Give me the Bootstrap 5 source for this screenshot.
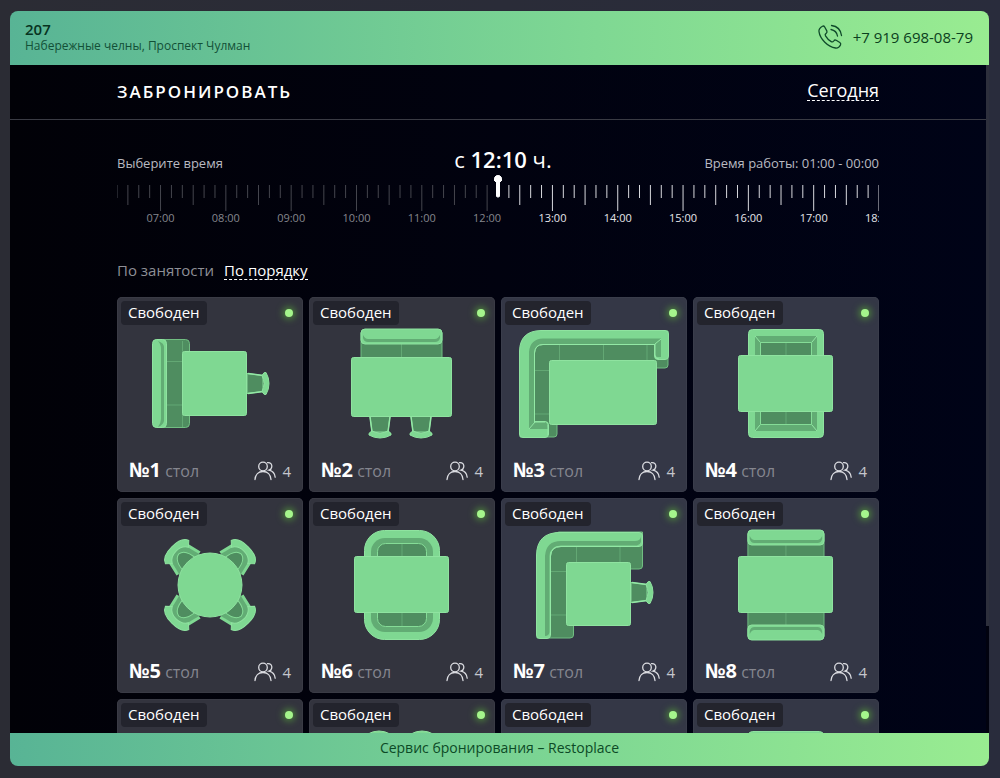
<!DOCTYPE html>
<html lang="ru">
<head>
<meta charset="utf-8">
<meta name="viewport" content="width=device-width, initial-scale=1">
<title>Restoplace – бронирование</title>
<link href="https://cdn.jsdelivr.net/npm/bootstrap@5.3.0/dist/css/bootstrap.min.css" rel="stylesheet">
<style>
  body { background: linear-gradient(90deg, #2b2c34, #292c3c); font-family: "Open Sans", "Noto Sans", sans-serif; color: #fff; padding: 11px 11px 12px 10px; }
  a { color: inherit; text-decoration: none; }
  .brand-bar { background: linear-gradient(90deg, #58b495, #7fd893 60%, #99ec91); color: #07331f; }
  .site-head { border-radius: 8px 8px 0 0; height: 54px; padding: 0 16px 2px 15px; }
  .site-foot { border-radius: 0 0 8px 8px; height: 33px; font-size: 14px; line-height: 30px; color: #0c4a26; }
  .place-name { font-size: 15px; line-height: 18px; font-weight: 600; }
  .place-addr { font-size: 12px; line-height: 16px; color: #125037; }
  .phone { font-size: 15px; gap: 10px; color: #0b4020; }
  .pane { background: linear-gradient(90deg, #010107, #01020f 50%, #000317); }
  .inner { max-width: 762px; width: 86%; margin: 0 auto; }
  .title-bar { height: 55px; border-bottom: 1px solid #3a3b44; }
  .title-bar h1 { font-size: 17px; line-height: 24px; font-weight: 600; letter-spacing: 2px; }
  .dashed { border-bottom: 1px dashed #fff; }
  .today { font-size: 18px; line-height: 20px; margin-bottom: 4px; }
  .note { font-size: 13px; line-height: 20px; color: #b9bac1; padding-bottom: 2px; }
  .chosen { font-size: 22px; line-height: 32px; padding-left: 10px; }
  .time-row { padding-top: 23px; }
  .scale { position: relative; height: 52px; }
  .scale svg { display: block; width: 100%; height: 52px; overflow: hidden; }
  .scale line { stroke: #d8d9de; }
  .scale line.past { stroke: #45464e; }
  .scale text { font-size: 11px; fill: #e6e6ea; text-anchor: middle; }
  .scale text.past { fill: #85868d; }
  .scale input { position: absolute; inset: 0; width: 100%; height: 22px; margin: 0; background: none; appearance: none; -webkit-appearance: none; }
  .scale input::-webkit-slider-thumb { -webkit-appearance: none; width: 8px; height: 22px; border: 0; border-radius: 4px; background: radial-gradient(circle at 4px 4px, #fff 4px, transparent 4px), linear-gradient(90deg, transparent 2px, #fff 2px, #fff 6px, transparent 6px); }
  .sorting { font-size: 15px; line-height: 18px; gap: 10px; padding: 34px 0 17px; color: #8e8f96; }
  .sorting .active { color: #fff; }
  .tables { --bs-gutter-x: 6px; --bs-gutter-y: 6px; }
  .spot { height: 195px; border-radius: 5px; background: #33343e; box-shadow: inset 0 0 0 1px #3a3b45; }
  .col:nth-child(4n+3) .spot, .col:nth-child(4n) .spot { background: #343746; box-shadow: inset 0 0 0 1px #3a3d4b; }
  .state { background: #23242d; border-radius: 4px; font-size: 15px; line-height: 22px; padding: 0 7px 2px; }
  .lamp { width: 8px; height: 8px; border-radius: 50%; background: #a5f58c; box-shadow: 0 0 7px 2px #4f8a3c; margin: 8px 6px 0 0; }
  .spot-top { height: 28px; padding: 4px 4px 0; }
  .plan { display: block; width: 100%; height: 120px; }
  .spot-foot { padding: 7px 12px 0; line-height: 36px; }
  .num { font-size: 20px; font-weight: 700; }
  .kind { font-size: 16px; color: #85868f; }
  .seats { font-size: 15px; color: #c5c6cd; gap: 6px; }
  .bar { width: 3px; background: #01020f; }
  .bar div { height: 84%; background: #2d2f3c; }
  .f { fill: #7fd892; stroke: #8fe3a0; }
  .s { fill: #4f8d60; stroke: #71bd82; }
  .m { fill: #62ac74; stroke: none; }
  .d { fill: #4f8d60; stroke: #85dc97; }
  .l { fill: none; stroke: #63a874; }
  .o { fill: none; stroke: #93e8a5; }
</style>
</head>
<body class="vh-100 d-flex flex-column">
<svg width="0" height="0" class="position-absolute" aria-hidden="true">
  <defs>
    <symbol id="people" viewBox="0 0 22 20"><g fill="none" stroke="#dcdde2" stroke-width="1.3" stroke-linecap="round"><circle cx="9" cy="5.500" r="4.300"/><path d="M1 18.500C1.300 13.500 4.500 10.500 9 10.500S16.700 13.500 17 18.500M13.500 1.600C16.500 1.300 18.200 3.300 17.800 5.800C17.500 7.700 16.300 8.800 15 9.200C18.500 10 20.800 12.500 21.200 16.200"/></g></symbol>
    <g id="chair"><path class="d" d="M-10-1H10L8 15H-8Z"/><path class="o" d="M-10 0L-8 15M10 0L8 15" stroke-width="1.500"/><path class="f" d="M-8 14Q0 18 8 14Q12 16 11 18Q6 21 0 21T-11 18Q-12 16-8 14Z"/></g>
    <g id="sofaBack"><rect class="s" x="52" y="33" width="81" height="30" rx="3"/><path class="l" d="M92.500 47V60"/><rect class="f" x="52" y="32" width="81" height="15" rx="4"/><path class="m" d="M54 38V41Q55 45 59 45H126Q130 45 131 41V38Q129 42 126 42H59Q56 42 54 38Z"/></g>
    <g id="sofaArms"><rect class="f" x="55.500" y="32.500" width="75" height="30" rx="4"/><path class="m" d="M62 39H124V58H119V45H67V58H62Z"/><path class="d" d="M67.500 60V45.500H118.500V60Z"/><path class="o" d="M62 39L67 45M124 39L119 45"/><path class="l" d="M93 46V58"/></g>
    <g id="armchair"><path class="m" d="M-15-24L-12-46Q0-54 12-46L15-24Z"/><path class="o" d="M-15.500-30L-12-45M15.500-30L12-45" stroke-width="3" style="stroke:#7fd892"/><path class="d" d="M-9-28Q-8-43 0-44Q8-43 9-28Z"/><path class="f" d="M-16.500-46.500Q-14-54 0-54Q14-54 16.500-46.500L11.500-42Q8-48 0-48Q-8-48-11.500-42Z"/></g>
    <g id="plan1"><rect class="s" x="36.500" y="42.500" width="36" height="88" rx="4"/><path class="l" d="M50 64.500H66M50 108H66M65.500 44V130"/><rect class="f" x="35.500" y="42.500" width="14" height="88" rx="4"/><path class="m" d="M41 44Q47 46 47 50V124Q46 128 41 130Q44 126 44 122V52Q44 47 41 44Z"/><use href="#chair" transform="translate(131 86.500) rotate(-90)"/><rect class="f" x="65.500" y="54.500" width="64" height="64" rx="2"/></g>
    <g id="plan4"><use href="#sofaArms"/><use href="#sofaArms" transform="matrix(1 0 0 -1 0 173)"/><rect class="f" x="45.500" y="58.500" width="94" height="56" rx="2"/></g>
    <g id="plan5"><g transform="translate(93 87)"><use href="#armchair" transform="rotate(45)"/><use href="#armchair" transform="rotate(135)"/><use href="#armchair" transform="rotate(225)"/><use href="#armchair" transform="rotate(315)"/><circle class="f" r="32"/></g></g>
  </defs>
</svg>

<header class="brand-bar site-head d-flex justify-content-between align-items-center flex-shrink-0">
  <div>
    <div class="place-name">207</div>
    <div class="place-addr">Набережные челны, Проспект Чулман</div>
  </div>
  <a href="tel:+79196980879" class="phone d-flex align-items-center">
    <svg width="26" height="26" viewBox="0 0 26 26" fill="none" stroke="#0f4a2a" stroke-width="1.300" stroke-linecap="round" stroke-linejoin="round" aria-hidden="true"><path d="M5.500 2.200C3 3.600 1.600 5.200 2 7.600C3 15 11 23 18.500 24C20.800 24.300 22.500 23 23.500 21C24 20 23.600 19.100 22.800 18.500L19.200 16.300C18.100 15.700 17.300 16.100 16.700 17C16 18 15.200 18.200 14.200 17.600C11.800 16.100 9.800 14 8.500 11.800C7.900 10.800 8.100 10 9.100 9.400C10 8.800 10.300 7.900 9.800 6.900L7.700 3C7.200 2.100 6.400 1.700 5.500 2.200ZM14.500 1.500C20 2.200 23.800 6 24.500 11.500M14 5.500C17.500 6.200 19.900 8.600 20.500 12"/></svg>
    <span>+7 919 698-08-79</span>
  </a>
</header>

<div class="d-flex flex-fill overflow-hidden">
<main class="pane flex-fill overflow-hidden">
  <div class="title-bar">
    <div class="inner h-100 d-flex justify-content-between align-items-center">
      <h1 class="m-0">ЗАБРОНИРОВАТЬ</h1>
      <a href="#" class="today dashed">Сегодня</a>
    </div>
  </div>
  <div class="inner">
    <div class="time-row row gx-0 align-items-end">
      <label for="time" class="note col">Выберите время</label>
      <div class="chosen col-auto">с <b class="fw-semibold">12:10</b> ч.</div>
      <div class="note col text-end">Время работы: 01:00 - 00:00</div>
    </div>
    <div class="scale">
      <svg id="ticks" aria-hidden="true"></svg>
      <input type="range" id="time" min="0" max="70" value="35">
    </div>
    <nav class="sorting d-flex">
      <a href="#">По занятости</a>
      <a href="#" class="active dashed">По порядку</a>
    </nav>
    <div id="tables" class="tables row row-cols-4"></div>
  </div>
</main>
<div class="bar"><div></div></div>
</div>

<footer class="brand-bar site-foot text-center flex-shrink-0">Сервис бронирования – Restoplace</footer>

<script>
  // Ten-minute ticks from 06:20 to 18:00
  let marks = '';
  for (let i = 0; i <= 70; i++) {
    const minutes = 380 + i * 10, x = i / 70 * 100 + '%';
    const cls = i < 35 ? 'past' : '';
    const end = minutes % 60 === 0 ? 36 : minutes % 30 === 0 ? 30 : 23;
    marks += `<line class="${cls}" x1="${x}" x2="${x}" y1="10" y2="${end}"/>`;
    if (minutes % 60 === 0) marks += `<text class="${cls}" x="${x}" y="47">${String(minutes / 60).padStart(2, '0')}:00</text>`;
  }
  document.getElementById('ticks').innerHTML = marks;

  const plans = [
    '<use href="#plan1"/>',
    '<use href="#sofaBack"/><use href="#chair" transform="translate(71 120)"/><use href="#chair" transform="translate(112 120)"/><rect class="f" x="42.500" y="60.500" width="100" height="59" rx="2"/>',
    '<path class="s" d="M19 140V60Q22 36 42 34H167V68Q167 71 164 71H56V137Q56 140 53 140Z"/><path class="l" d="M33 73.500H56M33 117H56M58.500 47V64M102.500 47V64M146 47V64"/><path class="f" d="M22 140.500Q18.500 140.500 18.500 137V54Q19 34 40 33.500H164Q167.500 33.500 167.500 37V59Q167.500 62.500 164 62.500H157Q153.500 62.500 153.500 59V47.500H42Q34 47.500 33.500 56V124.500H44Q47.500 124.500 47.500 128V137Q47.500 140.500 44 140.500Z"/><path class="m" d="M28 133V55Q29 42 42 41.500H160V60H157Q154 60 154 57V47H43Q34 47 33 56V125H44Q47 126 47 132H28Z"/><path class="o" d="M33.500 126V56Q34 47.500 42 47.500H154M28 132L34 125H44M160 42L154 47V58Q154 62 158 62M47 128V138"/><rect class="f" x="48.500" y="63.500" width="107" height="64" rx="2"/>',
    '<use href="#plan4"/>',
    '<use href="#plan5"/>',
    '<rect class="f" x="55.500" y="32.500" width="75" height="109" rx="20"/><rect class="m" x="62" y="40" width="62" height="94" rx="14"/><rect class="d" x="68.500" y="45.500" width="49" height="83" rx="8"/><path class="l" d="M93 46V128"/><rect class="f" x="45.500" y="58.500" width="94" height="56" rx="2"/>',
    '<path class="s" d="M36 140V60Q38 37 58 34H141.500V68Q141.500 71 138 71H72.500V137Q72.500 140 69 140Z"/><path class="l" d="M50 73.500H66M50 117H66M75.500 49V66M119 49V66"/><path class="f" d="M39 140.500Q35.500 140.500 35.500 137V57Q36 34.500 59 34.500H138Q141.500 34.500 141.500 38V45Q141.500 48.500 138 48.500H60Q50 48.500 49.500 58V137Q49.500 140.500 46 140.500Z"/><path class="m" d="M44 138V58Q45 43 60 43H134Q139 43 140 39V44Q139 47 136 47.500H60Q49 48 48.500 58V134Q48 138 44 138Z"/><path class="o" d="M49.500 137V58Q50 48.500 60 48.500H138"/><use href="#chair" transform="translate(131 94.500) rotate(-90)"/><rect class="f" x="65.500" y="64.500" width="64" height="63" rx="2"/>',
    '<use href="#sofaBack" transform="translate(6 0) scale(.94 1)"/><use href="#sofaBack" transform="translate(6 174) scale(.94 -1)"/><rect class="f" x="45.500" y="58.500" width="94" height="56" rx="2"/>',
    '<use href="#plan1"/>',
    '<use href="#chair" transform="translate(70 53) scale(1 -1)"/><use href="#chair" transform="translate(113 53) scale(1 -1)"/><rect class="f" x="42.500" y="53.500" width="100" height="59" rx="2"/>',
    '<use href="#plan5"/>',
    '<use href="#plan4"/>'
  ];
  document.getElementById('tables').innerHTML = plans.map((plan, i) => `
    <div class="col"><article class="spot">
      <div class="spot-top d-flex justify-content-between align-items-start"><span class="state">Свободен</span><span class="lamp"></span></div>
      <svg class="plan" viewBox="0 28 186 120" aria-hidden="true">${plan}</svg>
      ${i < 8 ? `<div class="spot-foot d-flex justify-content-between">
        <div><span class="num">№${i + 1}</span> <span class="kind">стол</span></div>
        <div class="seats d-flex align-items-center"><svg width="22" height="20" aria-hidden="true"><use href="#people"/></svg>4</div>
      </div>` : ''}
    </article></div>`).join('');
</script>
<script src="https://cdn.jsdelivr.net/npm/bootstrap@5.3.0/dist/js/bootstrap.bundle.min.js"></script>
</body>
</html>
